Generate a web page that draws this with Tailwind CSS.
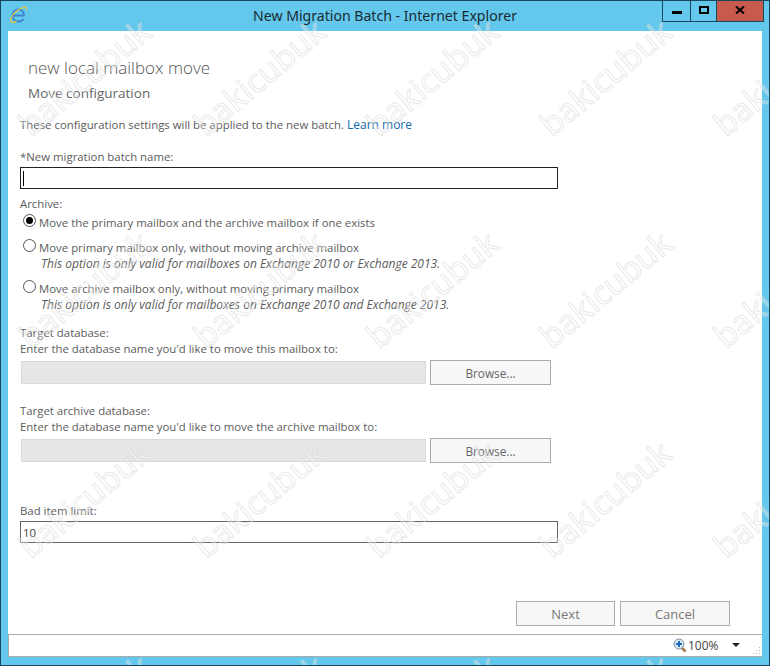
<!DOCTYPE html>
<html lang="en">
<head>
    <meta charset="UTF-8">
    <title>New Migration Batch - Internet Explorer</title>
    <script src="https://cdn.jsdelivr.net/npm/@tailwindcss/browser@4"></script>
</head>
<body class="bg-[#63c8ec]">
    <div class="relative w-[770px] h-[666px] overflow-hidden bg-[#63c8ec] border border-[#17475c] font-['Open_Sans',sans-serif] text-[#5c5c5c] text-[11.4px] leading-[16px]">
        <!-- title bar -->
        <div class="relative h-[30px] flex items-center justify-center text-[14.1px] text-[#1a2a33] font-['Noto_Sans',sans-serif]">
            <svg class="absolute left-[9px] top-[5px]" width="18" height="18" viewBox="0 0 18 18" fill="none">
                <path d="M3 9.500H14C14 6 11.500 3.500 8.500 3.500C5 3.500 2.500 6 2.500 9.500C2.500 13 5 15.500 8.500 15.500C10.500 15.500 12.500 14.500 13.500 13" stroke="#3d86cf" stroke-width="1.800"/>
                <path d="M15.500 1.200C11 1.500 4 6 1.500 11C0 14.500 .5 16.500 2.500 16.500C4 16.500 5.500 15.800 6.500 15" stroke="#e8c53a" stroke-width="1.200"/>
                <path d="M13 1.500C15.500 .5 17 1.500 16.500 4" stroke="#e8c53a" stroke-width="1.100"/>
            </svg>
            <span>New Migration Batch - Internet Explorer</span>
            <div class="absolute right-[5px] top-[-1px] flex h-[22px] border border-[#17475c] border-t-0">
                <div class="w-[28px] flex items-center justify-center border-r border-[#17475c]"><div class="w-[10px] h-[3px] bg-black mt-[3px]"></div></div>
                <div class="w-[26px] flex items-center justify-center border-r border-[#17475c]"><div class="w-[10px] h-[8px] border-2 border-black -mt-[2px]"></div></div>
                <div class="w-[46px] flex items-center justify-center bg-[#c75a4c]">
                    <svg class="-mt-[2px]" width="10" height="8" viewBox="0 0 10 8"><path d="M1 0.500L9 7.500M9 0.500L1 7.500" stroke="#000" stroke-width="2"/></svg>
                </div>
            </div>
        </div>

        <!-- client area -->
        <div class="mx-[7px] w-[754px] h-[626px] bg-white flex flex-col">
            <div class="relative flex-1 px-[12px]">
                <h1 class="pl-[8px] pt-[26px] h-[49px] text-[17px] leading-[22px] text-[#555] font-light">new local mailbox move</h1>
                <h2 class="pl-[8px] pt-[2px] h-[27px] text-[13.5px] leading-[22px] text-[#666] font-normal">Move configuration</h2>
                <p class="mt-[10px]">These configuration settings will be applied to the new batch. <a class="text-[12px] text-[#0f6aa8]">Learn more</a></p>
                <label class="block mt-[16px]">*New migration batch name:</label>
                <div class="mt-[2px] w-[538px] h-[22px] border border-[#222] flex items-center pl-[2px]"><div class="w-px h-[15px] bg-black"></div></div>

                <div class="mt-[7px]">Archive:</div>
                <div class="mt-[3px] h-[16px] flex">
                    <span class="ml-[3px] w-[13px] h-[13px] -mt-[1px] rounded-full border border-[#555] flex items-center justify-center"><span class="w-[7px] h-[7px] rounded-full bg-black"></span></span>
                    <span class="ml-[3px]">Move the primary mailbox and the archive mailbox if one exists</span>
                </div>
                <div class="mt-[9px] h-[16px] flex">
                    <span class="ml-[3px] w-[13px] h-[13px] -mt-[1px] rounded-full border border-[#555]"></span>
                    <span class="ml-[3px]">Move primary mailbox only, without moving archive mailbox</span>
                </div>
                <div class="pl-[21px] italic text-[12px]">This option is only valid for mailboxes on Exchange 2010 or Exchange 2013.</div>
                <div class="mt-[9px] h-[16px] flex">
                    <span class="ml-[3px] w-[13px] h-[13px] -mt-[1px] rounded-full border border-[#555]"></span>
                    <span class="ml-[3px]">Move archive mailbox only, without moving primary mailbox</span>
                </div>
                <div class="pl-[21px] italic text-[12px]">This option is only valid for mailboxes on Exchange 2010 and Exchange 2013.</div>

                <div class="mt-[12px]">Target database:</div>
                <div>Enter the database name you'd like to move this mailbox to:</div>
                <div class="mt-[3px] flex items-center">
                    <div class="ml-[1px] w-[405px] h-[23px] bg-[#e6e6e6] border border-[#d9d9d9]"></div>
                    <button class="ml-[4px] w-[121px] h-[25px] bg-[#f7f7f7] border border-[#ababab] text-[11.8px] text-[#666]">Browse...</button>
                </div>

                <div class="mt-[18px]">Target archive database:</div>
                <div>Enter the database name you'd like to move the archive mailbox to:</div>
                <div class="mt-[3px] flex items-center">
                    <div class="ml-[1px] w-[405px] h-[23px] bg-[#e6e6e6] border border-[#d9d9d9]"></div>
                    <button class="ml-[4px] w-[121px] h-[25px] bg-[#f7f7f7] border border-[#ababab] text-[11.8px] text-[#666]">Browse...</button>
                </div>

                <div class="mt-[40px]">Bad item limit:</div>
                <div class="mt-[2px] w-[538px] h-[22px] border border-[#666] flex items-center pl-[2px] pt-px text-[#444]">10</div>

                <div class="absolute right-[32px] bottom-[8px] flex gap-[5px]">
                    <button class="w-[99px] h-[25px] bg-[#f7f7f7] border border-[#ababab] text-[13px] text-[#777]">Next</button>
                    <button class="w-[110px] h-[25px] bg-[#f7f7f7] border border-[#ababab] text-[13px] text-[#777]">Cancel</button>
                </div>
            </div>

            <!-- status bar -->
            <div class="relative h-[23px] border border-[#aaa] border-r-0 flex items-center justify-end text-[12px] text-[#444]">
                <svg class="absolute left-[664px] top-[3px]" width="14" height="15" viewBox="0 0 14 15" fill="none">
                    <path d="M8.500 9.500L12.500 13.500" stroke="#a9784a" stroke-width="2.500"/>
                    <circle cx="6" cy="6" r="5" fill="#dbe9f5" stroke="#7d94a8"/>
                    <path d="M3 6H9M6 3V9" stroke="#1d68b8" stroke-width="2"/>
                </svg>
                <span class="absolute left-[679px] top-[3px]">100%</span>
                <span class="absolute left-[723px] top-[8px] w-0 h-0 border-x-[4px] border-x-transparent border-t-[4px] border-t-[#222]"></span>
                <svg class="absolute right-[1px] bottom-[1px]" width="8" height="8"><g fill="#bbb"><rect x="6" y="0" width="1" height="1"/><rect x="3" y="3" width="1" height="1"/><rect x="6" y="3" width="1" height="1"/><rect x="0" y="6" width="1" height="1"/><rect x="3" y="6" width="1" height="1"/><rect x="6" y="6" width="1" height="1"/></g></svg>
            </div>
        </div>

        <!-- watermark -->
        <div id="marks" class="absolute inset-0 pointer-events-none overflow-hidden"></div>
    </div>
    <script>
        const marks = document.getElementById('marks');
        [76, 288, 498, 712].forEach(y => {
            [83, 258, 431, 604, 778].forEach(x => {
                const s = document.createElement('span');
                s.textContent = 'bakicubuk';
                s.className = "absolute -translate-x-1/2 -translate-y-1/2 -rotate-[40deg] font-['Noto_Sans',sans-serif] text-[33px] leading-none text-white/30 [-webkit-text-stroke:1px_rgba(215,215,215,0.55)]";
                s.style.left = x + 'px';
                s.style.top = y + 'px';
                marks.appendChild(s);
            });
        });
    </script>
</body>
</html>
